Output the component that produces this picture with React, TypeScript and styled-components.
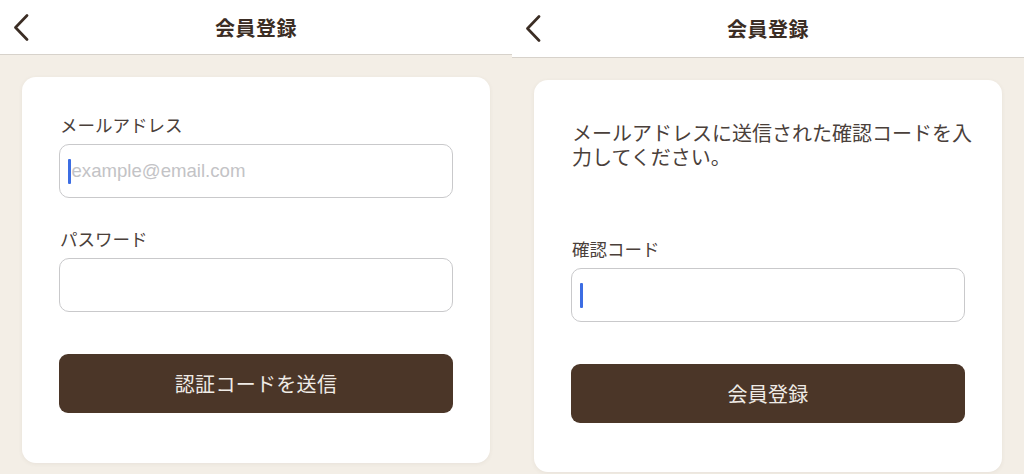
import React from 'react';
import styled, { createGlobalStyle } from 'styled-components';

const GlobalStyle = createGlobalStyle`
  html, body {
    margin: 0;
    padding: 0;
    background: #f3eee6;
  }
  body {
    font-family: 'Noto Sans CJK JP', 'Noto Sans', sans-serif;
    -webkit-font-smoothing: antialiased;
  }
  * {
    box-sizing: border-box;
  }
`;

const Page = styled.div`
  width: 1024px;
  height: 474px;
  display: flex;
  overflow: hidden;
`;

const Screen = styled.section`
  width: 512px;
  height: 100%;
  display: flex;
  flex-direction: column;
  background-color: #f3eee6;
`;

const Header = styled.header<{ $height: number }>`
  height: ${({ $height }) => $height}px;
  flex-shrink: 0;
  display: grid;
  grid-template-columns: 60px 1fr 60px;
  align-items: center;
  background-color: #fff;
  border-bottom: 1px solid #d7d2cb;
`;

const BackButton = styled.button`
  border: 0;
  background: none;
  padding: 0 0 0 13px;
  display: flex;
  align-items: center;
  height: 100%;
  cursor: pointer;
`;

const Title = styled.h1`
  margin: 0;
  text-align: center;
  font-size: 20px;
  font-weight: 700;
  color: #3b2d24;
  letter-spacing: 0.5px;
`;

const Body = styled.main`
  padding: 22px 22px 0;
`;

const Card = styled.div<{ $bottom: number }>`
  background-color: #fff;
  border-radius: 14px;
  box-shadow: 0 1px 4px rgba(90, 70, 50, 0.07);
  padding: 36px 37px ${({ $bottom }) => $bottom}px;
  display: flex;
  flex-direction: column;
`;

const Message = styled.p`
  margin: 5px -14px 0 1px;
  font-size: 20px;
  line-height: 24px;
  color: #4a403a;
`;

const Label = styled.label<{ $top: number }>`
  display: block;
  margin: ${({ $top }) => $top}px 0 7px 1px;
  font-size: 17.5px;
  line-height: 24px;
  color: #4a403a;
`;

const Field = styled.div`
  height: 54px;
  border: 1.5px solid #c9c9cb;
  border-radius: 10px;
  display: flex;
  align-items: center;
  padding-left: 8px;
  background-color: #fff;
`;

const Caret = styled.span`
  width: 2.5px;
  height: 25px;
  border-radius: 1px;
  background-color: #3c6de3;
`;

const Placeholder = styled.span`
  margin-left: 1px;
  font-family: 'Liberation Sans', Arial, sans-serif;
  font-size: 18.6px;
  color: #c3c3c6;
`;

const SubmitButton = styled.button`
  margin-top: 42px;
  height: 59px;
  border: 0;
  border-radius: 9px;
  background-color: #4b3628;
  color: #efebe6;
  font-family: 'Noto Sans CJK JP', 'Noto Sans', sans-serif;
  font-size: 20px;
  letter-spacing: 0.3px;
  cursor: pointer;
`;

function Chevron() {
  return (
    <svg width="16" height="27" viewBox="0 0 16 27" fill="none">
      <polyline
        points="14,1.5 2.5,13.5 14,25.5"
        stroke="#3b2d24"
        strokeWidth="2.7"
        strokeLinecap="round"
        strokeLinejoin="round"
      />
    </svg>
  );
}

function TopBar({ height }: { height: number }) {
  return (
    <Header $height={height}>
      <BackButton aria-label="戻る">
        <Chevron />
      </BackButton>
      <Title>会員登録</Title>
      <span />
    </Header>
  );
}

function App() {
  return (
    <>
      <GlobalStyle />
      <Page>
        <Screen>
          <TopBar height={55} />
          <Body>
            <Card $bottom={50}>
              <Label $top={0}>メールアドレス</Label>
              <Field>
                <Caret />
                <Placeholder>example@email.com</Placeholder>
              </Field>
              <Label $top={29}>パスワード</Label>
              <Field />
              <SubmitButton>認証コードを送信</SubmitButton>
            </Card>
          </Body>
        </Screen>
        <Screen>
          <TopBar height={58} />
          <Body>
            <Card $bottom={49}>
              <Message>メールアドレスに送信された確認コードを入力してください。</Message>
              <Label $top={68}>確認コード</Label>
              <Field>
                <Caret />
              </Field>
              <SubmitButton>会員登録</SubmitButton>
            </Card>
          </Body>
        </Screen>
      </Page>
    </>
  );
}

export default App;
